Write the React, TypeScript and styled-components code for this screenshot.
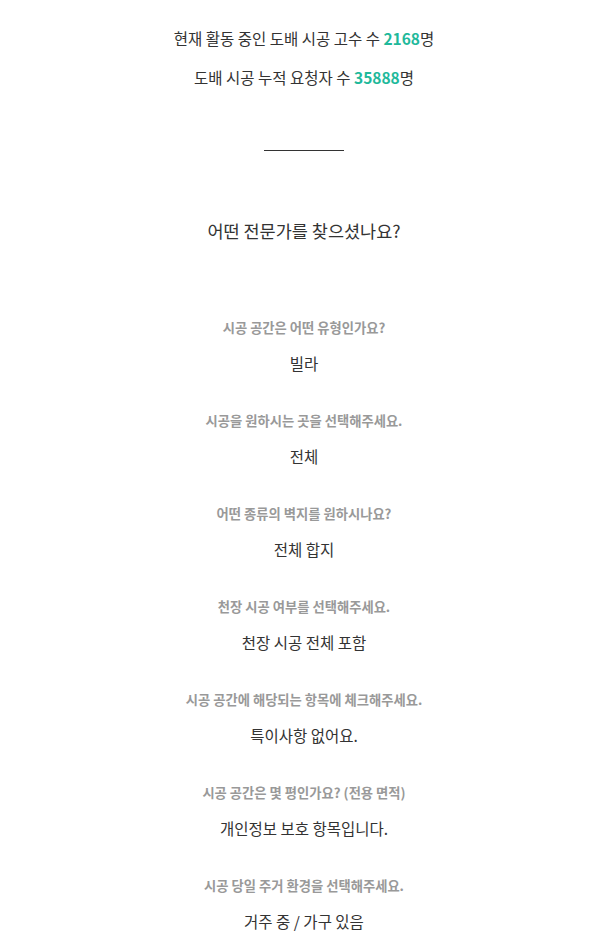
import React from 'react';
import styled, { createGlobalStyle } from 'styled-components';

const GlobalStyle = createGlobalStyle`
  html, body {
    margin: 0;
    padding: 0;
    background: #ffffff;
  }
  body {
    font-family: 'Noto Sans CJK KR', 'Noto Sans', sans-serif;
    color: #333333;
  }
`;

const Page = styled.div`
  display: flex;
  flex-direction: column;
  align-items: center;
  padding: 27px 0 0 11px;
  text-align: center;
`;

const StatLine = styled.p`
  margin: 0 0 17px;
  font-size: 15.5px;
  line-height: 22px;
  color: #333333;
`;

const Count = styled.strong`
  font-weight: 700;
  color: #1fb99b;
`;

const Divider = styled.hr`
  width: 80px;
  height: 1px;
  border: 0;
  background: #333333;
  margin: 45px 0 0;
`;

const Heading = styled.h2`
  margin: 68px 0 0;
  font-size: 17.5px;
  font-weight: 400;
  line-height: 24px;
  color: #333333;
`;

const List = styled.div`
  display: flex;
  flex-direction: column;
  align-items: center;
  gap: 39px;
  margin-top: 76px;
`;

const Item = styled.div`
  display: flex;
  flex-direction: column;
  align-items: center;
  gap: 16px;
`;

const Question = styled.div`
  font-size: 13.3px;
  font-weight: 700;
  line-height: 18px;
  color: #999999;
`;

const Answer = styled.div`
  font-size: 15.5px;
  line-height: 20px;
  color: #333333;
`;

const items: { q: string; a: string }[] = [
  { q: '시공 공간은 어떤 유형인가요?', a: '빌라' },
  { q: '시공을 원하시는 곳을 선택해주세요.', a: '전체' },
  { q: '어떤 종류의 벽지를 원하시나요?', a: '전체 합지' },
  { q: '천장 시공 여부를 선택해주세요.', a: '천장 시공 전체 포함' },
  { q: '시공 공간에 해당되는 항목에 체크해주세요.', a: '특이사항 없어요.' },
  { q: '시공 공간은 몇 평인가요? (전용 면적)', a: '개인정보 보호 항목입니다.' },
  { q: '시공 당일 주거 환경을 선택해주세요.', a: '거주 중 / 가구 있음' },
];

export default function App() {
  return (
    <>
      <GlobalStyle />
      <Page>
        <StatLine>
          현재 활동 중인 도배 시공 고수 수 <Count>2168</Count>명
        </StatLine>
        <StatLine>
          도배 시공 누적 요청자 수 <Count>35888</Count>명
        </StatLine>
        <Divider />
        <Heading>어떤 전문가를 찾으셨나요?</Heading>
        <List>
          {items.map((item) => (
            <Item key={item.q}>
              <Question>{item.q}</Question>
              <Answer>{item.a}</Answer>
            </Item>
          ))}
        </List>
      </Page>
    </>
  );
}
